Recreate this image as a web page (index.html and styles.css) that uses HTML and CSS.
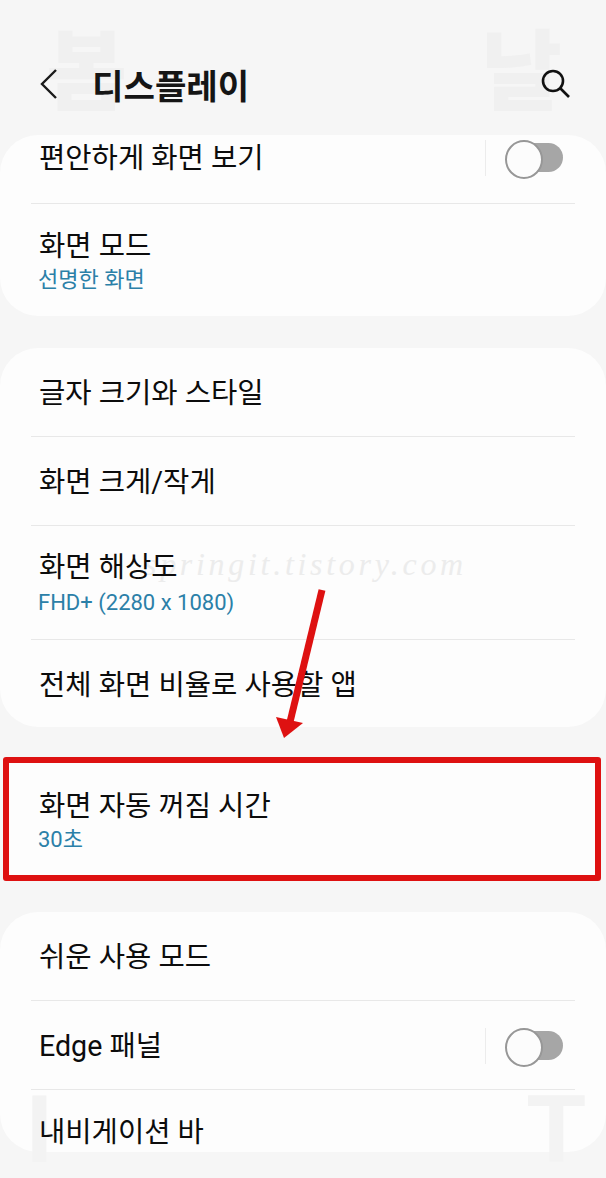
FILE: index.html
```html
<!DOCTYPE html>
<html lang="ko">

<head>
    <meta charset="UTF-8">
    <meta name="viewport" content="width=device-width, initial-scale=1.0">
    <title>디스플레이</title>
    <link rel="stylesheet" href="styles.css">
</head>

<body>
    <div class="page">
        <!-- faded watermark behind the settings -->
        <div class="ghost ghost-spring">봄</div>
        <div class="ghost ghost-day">날</div>
        <div class="ghost ghost-i">I</div>
        <div class="ghost ghost-t">T</div>

        <header class="topbar">
            <svg class="back" width="20" height="32" viewBox="0 0 20 32">
                <path d="M17 2 L3 16 L17 30" fill="none" stroke="#1a1a1a" stroke-width="2.4"/>
            </svg>
            <h1>디스플레이</h1>
            <svg class="search" width="32" height="32" viewBox="0 0 32 32">
                <circle cx="13" cy="12" r="10" fill="none" stroke="#111" stroke-width="2.6"/>
                <path d="M20.5 19.5 L29 28" fill="none" stroke="#111" stroke-width="2.6"/>
            </svg>
        </header>

        <section class="card card-first">
            <div class="row row-cut">
                <span class="title">편안하게 화면 보기</span>
                <span class="switch-wrap"><span class="switch"></span></span>
            </div>
            <div class="row row-sub row-mode">
                <span class="title">화면 모드</span>
                <span class="sub">선명한 화면</span>
            </div>
        </section>

        <section class="card card-second">
            <div class="row"><span class="title">글자 크기와 스타일</span></div>
            <div class="row"><span class="title">화면 크게/작게</span></div>
            <div class="row row-sub">
                <span class="title">화면 해상도</span>
                <span class="sub">FHD+ (2280 x 1080)</span>
            </div>
            <div class="row"><span class="title">전체 화면 비율로 사용할 앱</span></div>
        </section>

        <section class="highlight">
            <span class="title">화면 자동 꺼짐 시간</span>
            <span class="sub">30초</span>
        </section>

        <section class="card card-third">
            <div class="row"><span class="title">쉬운 사용 모드</span></div>
            <div class="row">
                <span class="title">Edge 패널</span>
                <span class="switch-wrap"><span class="switch"></span></span>
            </div>
            <div class="row row-last"><span class="title">내비게이션 바</span></div>
        </section>

        <div class="mark">springit.tistory.com</div>

        <svg class="arrow" width="606" height="1178" viewBox="0 0 606 1178">
            <path d="M322 590 L290 722" fill="none" stroke="#de1111" stroke-width="7"/>
            <path d="M276 717 L303 723 L284 738 Z" fill="#de1111"/>
        </svg>
    </div>
</body>

</html>
```

FILE: styles.css
```css
* {
    margin: 0;
    padding: 0;
    box-sizing: border-box;
}

body {
    font-family: Roboto, 'Noto Sans CJK KR', sans-serif;
    background: #f6f6f6;
    color: #0c0c0c;
}

.page {
    position: relative;
    width: 606px;
    height: 1178px;
    overflow: hidden;
}

/* Watermark */
.ghost {
    position: absolute;
    font-family: 'Noto Sans CJK KR', sans-serif;
    font-weight: 900;
    font-size: 88px;
    line-height: 88px;
    color: #f0f0f0;
    z-index: 2;
    pointer-events: none;
}

.ghost-spring {
    left: 46px;
    top: 21px;
}

.ghost-day {
    left: 481px;
    top: 21px;
}

.ghost-i,
.ghost-t {
    font-family: 'Liberation Sans', sans-serif;
    font-size: 96px;
    line-height: 96px;
    color: #f3f3f3;
}

.ghost-i {
    left: 26px;
    top: 1081px;
}

.ghost-t {
    left: 527px;
    top: 1081px;
}

.mark {
    position: absolute;
    left: 144px;
    top: 546px;
    font-family: 'Liberation Serif', serif;
    font-style: italic;
    font-size: 32px;
    letter-spacing: 3.7px;
    color: #ececec;
    z-index: 2;
}

.arrow {
    position: absolute;
    left: 0;
    top: 0;
    z-index: 4;
}

/* Top bar */
.topbar {
    position: relative;
    z-index: 3;
    display: flex;
    align-items: center;
    height: 135px;
    padding: 32px 34px 0 39px;
}

.topbar h1 {
    flex: 1;
    margin-left: 33px;
    font-size: 34.2px;
    font-weight: 700;
    color: #151515;
}

.search {
    margin-top: 3px;
}

/* Cards */
.card {
    position: relative;
    background: #fdfdfd;
    border-radius: 38px;
    overflow: hidden;
}

.card-first {
    height: 181px;
    margin-bottom: 32px;
}

.card-second {
    height: 379px;
    margin-bottom: 30px;
}

.card-third {
    height: 240px;
    margin-top: 31px;
}

.row {
    position: relative;
    z-index: 3;
    display: flex;
    align-items: center;
    justify-content: space-between;
    height: 89px;
    margin: 0 31px;
    padding: 1px 12px 0 8px;
    border-bottom: 1px solid #e8e8e8;
}

.row:last-child {
    border-bottom: none;
}

.row-cut {
    height: 69px;
    padding-top: 0;
    padding-bottom: 22px;
}

.row-sub {
    flex-direction: column;
    align-items: flex-start;
    justify-content: center;
    height: 114px;
}

.row-mode {
    height: 112px;
    padding-top: 1px;
}

.row-last {
    height: 63px;
    padding-top: 21px;
}

.title {
    font-size: 28.6px;
    line-height: 40px;
    white-space: nowrap;
}

.sub {
    margin-left: -1px;
    font-size: 22px;
    line-height: 32px;
    color: #2b80a8;
    white-space: nowrap;
}

.row-mode .sub,
.highlight .sub {
    margin-top: -2px;
}

/* Toggle */
.switch-wrap {
    display: flex;
    justify-content: flex-end;
    width: 78px;
    height: 36px;
    border-left: 1px solid #ececec;
}

.switch {
    position: relative;
    display: block;
    width: 53px;
    height: 29px;
    margin-top: 3px;
    background: #a6a6a6;
    border-radius: 15px;
}

.switch::after {
    content: "";
    position: absolute;
    left: -5px;
    top: -3px;
    width: 34px;
    height: 35px;
    background: #fcfcfc;
    border: 2px solid #979797;
    border-radius: 50%;
}

/* Red highlighted row */
.highlight {
    position: relative;
    z-index: 3;
    display: flex;
    flex-direction: column;
    justify-content: center;
    width: 598px;
    height: 124px;
    margin-left: 3px;
    padding: 4px 0 0 30px;
    background: #fdfdfd;
    border: 6px solid #de1111;
    border-radius: 3px;
}
```
